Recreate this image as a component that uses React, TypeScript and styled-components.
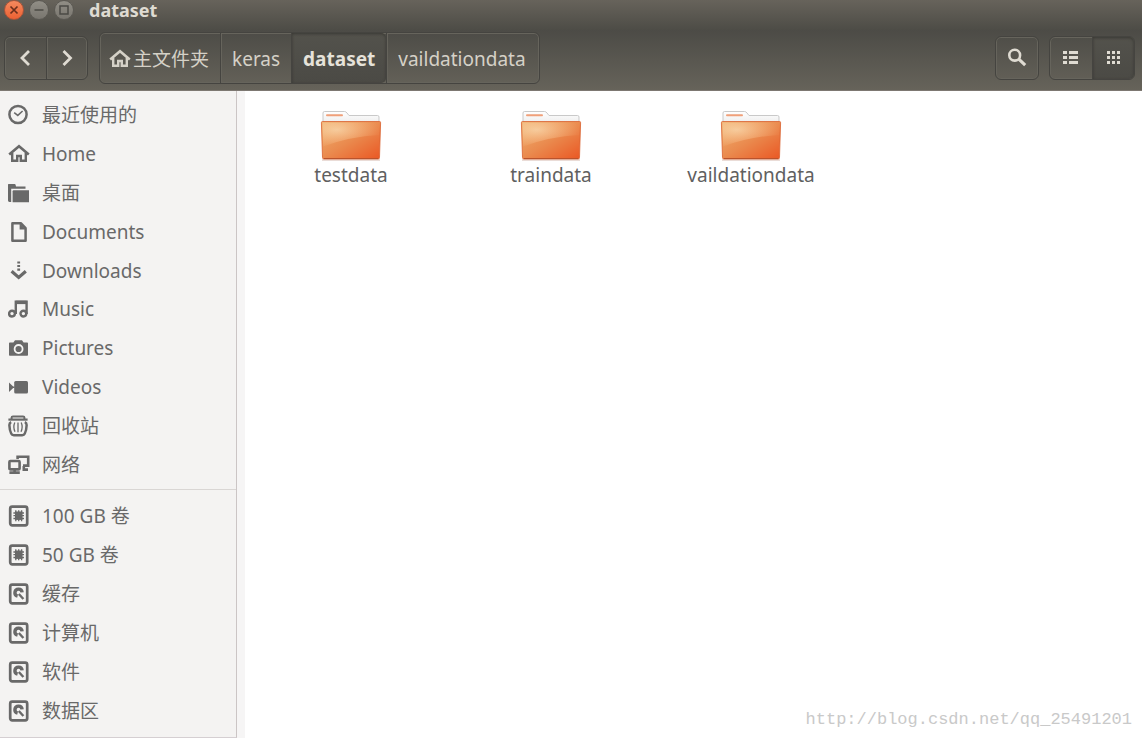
import React from "react";
import styled, { createGlobalStyle, css } from "styled-components";

const GlobalStyle = createGlobalStyle`
  *, *::before, *::after { box-sizing: border-box; }
  body {
    margin: 0;
    background: #fff;
    font-family: "Noto Sans", "Noto Sans CJK SC", sans-serif;
    font-size: 19px;
    line-height: 24px;
  }
`;

const Window = styled.div`
  display: flex;
  flex-direction: column;
  min-height: 100vh;
`;

const TitleBar = styled.header`
  display: flex;
  align-items: flex-start;
  height: 30px;
  padding-left: 4px;
  background: linear-gradient(#67635b, #4d4c46);
`;

const WindowControls = styled.div`
  display: flex;
  gap: 5px;
`;

const WindowButton = styled.button<{ $close?: boolean }>`
  display: grid;
  place-items: center;
  width: 20px;
  height: 20px;
  padding: 0;
  border: 1px solid ${(p) => (p.$close ? "#a8543a" : "#5b5953")};
  border-radius: 50%;
  background: ${(p) =>
    p.$close ? "linear-gradient(#f58a5e, #ec6133)" : "linear-gradient(#918e86, #79766f)"};
  color: ${(p) => (p.$close ? "#6b2f1c" : "#4b4a45")};
`;

const Title = styled.h1`
  margin: 0 0 0 15px;
  color: #dfdbd2;
  font-size: 18px;
  font-weight: 700;
  line-height: 20px;
`;

const ToolBar = styled.div`
  display: flex;
  align-items: center;
  height: 61px;
  padding: 0 7px 4px 4px;
  border-bottom: 1px solid #7d7872;
  background: linear-gradient(#4c4b46, #66635a);
`;

const ButtonGroup = styled.div<{ $gap?: number }>`
  display: flex;
  margin-left: ${(p) => p.$gap ?? 0}px;
  border: 1px solid #454440;
  border-radius: 6px;
  box-shadow: inset 0 0 0 1px #66645c;
`;

const pressed = css`
  background: linear-gradient(#53524c, #4b4a45);
  box-shadow: inset 0 1px 3px #393833;
`;

const ToolButton = styled.button<{ $active?: boolean; $narrow?: boolean }>`
  display: grid;
  place-items: center;
  width: ${(p) => (p.$narrow ? 41 : 42)}px;
  height: 42px;
  padding: 0;
  border: 0;
  border-radius: 0;
  background: none;
  color: #dfdbd2;
  & + & { border-left: 1px solid #454440; box-shadow: inset 1px 0 #66645c; }
  &:last-child { border-radius: 0 5px 5px 0; }
  ${(p) => p.$active && css`&&& { ${pressed} }`}
`;

const PathBar = styled.nav`
  display: flex;
  margin-left: 11px;
  border: 1px solid #454440;
  border-radius: 6px;
  box-shadow: inset 0 0 0 1px #66645c;
`;

const PathButton = styled.button<{ $active?: boolean }>`
  display: flex;
  align-items: center;
  gap: 2px;
  height: 50px;
  padding: 2px 11px 0;
  border: 0;
  background: none;
  color: #d5d1c7;
  font: inherit;
  white-space: nowrap;
  &:first-child { padding-left: 9px; }
  &:last-child { padding-right: 13px; }
  & + & { border-left: 1px solid #454440; box-shadow: inset 1px 0 #66645c; }
  ${(p) =>
    p.$active &&
    css`&&& { ${pressed} border-radius: 0 5px 5px 0; color: #e6e2da; font-weight: 700; }`}
`;

const Actions = styled.div`
  display: flex;
  margin-left: auto;
`;

const Body = styled.div`
  display: flex;
  flex: 1;
`;

const Sidebar = styled.nav`
  flex: 0 0 237px;
  padding: 5px 0;
  border-right: 1px solid #cbc5c5;
  border-bottom: 1px solid #d5cfd2;
  background: #f4f3f2;
`;

const PlaceList = styled.ul<{ $height: number }>`
  display: grid;
  grid-auto-rows: 1fr;
  min-height: ${(p) => p.$height}px;
  margin: 0;
  padding: 0;
  list-style: none;
  & + & {
    margin-top: 5px;
    padding-top: 7px;
    border-top: 1px solid #d9d6d4;
  }
`;

const Place = styled.a`
  display: flex;
  align-items: center;
  gap: 12px;
  height: 100%;
  padding-left: 8px;
  color: #696969;
  text-decoration: none;
`;

const Content = styled.main`
  display: flex;
  flex: 1;
  flex-direction: column;
  justify-content: space-between;
  border-left: 8px solid #f6f5f5;
  background: #fff;
`;

const Files = styled.div`
  display: flex;
  flex-wrap: wrap;
  padding: 19px 6px;
`;

const FileItem = styled.a`
  display: flex;
  flex-direction: column;
  align-items: center;
  width: 200px;
  color: #606060;
  text-decoration: none;
`;

const FileName = styled.span`
  margin-top: 1px;
`;

const Watermark = styled.footer`
  padding: 0 10px 6px;
  color: #c9c9c9;
  font-family: "Liberation Mono", monospace;
  font-size: 17px;
  text-align: right;
`;

const HomeShape = () => (
  <>
    <path d="M1.2 11.4 11 3.2l9.8 8.2" fill="none" stroke="currentColor" strokeWidth="2.6" />
    <path d="M4.2 10v7.8h5V13h3.6v4.8h5V10" fill="none" stroke="currentColor" strokeWidth="2.4" />
  </>
);

const DriveFrame = () => (
  <rect x="2.2" y="1.7" width="17" height="18.6" rx="2" fill="none" stroke="currentColor" strokeWidth="2.7" />
);

const shapes: Record<string, React.ReactNode> = {
  recent: (
    <g fill="none" stroke="currentColor">
      <circle cx="10" cy="10.5" r="8.6" strokeWidth="2.5" />
      <path d="M6.2 8.6 9.8 11.4l4.8-4.4" strokeWidth="1.5" />
    </g>
  ),
  home: <HomeShape />,
  desktop: (
    <g fill="currentColor">
      <path d="M0 2.5Q0 2 .6 2h6q.8 0 1 .8L8 4.4h9.5v2.4H3.2V20H1.4Q0 20 0 18.6Z" />
      <path d="M4.6 9.2q0-1 1-1H21v12H4.6Z" />
    </g>
  ),
  documents: (
    <g>
      <path d="M4.4 2.2h8.4l4.8 5v12.6H4.4Z" fill="none" stroke="currentColor" strokeWidth="2.5" strokeLinejoin="round" />
      <path d="M11.6 2v6.4H18Z" fill="currentColor" />
    </g>
  ),
  downloads: (
    <g fill="currentColor">
      <path d="M9.3 1.4h2.8v2H9.3ZM9.3 5h2.8v2H9.3ZM9.3 8.6h2.8v2.2H9.3Z" />
      <path d="m3.6 11.2 7.1 6.2 7.1-6.2" fill="none" stroke="currentColor" strokeWidth="3.2" />
    </g>
  ),
  music: (
    <g fill="none" stroke="currentColor" strokeWidth="2.4">
      <circle cx="4" cy="15.6" r="2.9" />
      <circle cx="15.4" cy="15.6" r="2.9" />
      <path d="M7.8 16V3.6h10.8V16" />
      <path d="M7.8 4.4h10.8" strokeWidth="3.4" />
    </g>
  ),
  pictures: (
    <g>
      <path d="M1.8 5.4h3.6L7 3.2h7l1.6 2.2h3.6q.8 0 .8.8V18q0 .8-.8.8H1.8Q1 18.8 1 18V6.2q0-.8.8-.8Z" fill="currentColor" />
      <circle cx="10.6" cy="12" r="4" fill="none" stroke="#f4f3f2" strokeWidth="1.8" />
    </g>
  ),
  videos: (
    <g fill="currentColor">
      <path d="M1 6.4 5.2 10.4h1.4v1.6H5.2L1 16Z" />
      <rect x="6.2" y="5" width="13.8" height="12.4" rx="1.5" />
    </g>
  ),
  trash: (
    <g fill="none" stroke="currentColor">
      <path d="M.4 4.6h19.2" strokeWidth="2.2" />
      <path d="M3.6 4V2.6Q3.6 1.4 5 1.4h10q1.4 0 1.4 1.2V4" strokeWidth="2" />
      <path d="M3.2 7.2Q1.2 8 1.4 10.5q.2 5 1.8 8 .7 1.7 2.6 1.7h8.4q1.9 0 2.6-1.7 1.6-3 1.8-8 .2-2.5-1.8-3.3" strokeWidth="2.5" />
      <path d="M6.8 7.4q-2 4.5.2 9.4M10 7.4v9.8M13.2 7.4q2 4.5-.2 9.4" strokeWidth="1.3" />
    </g>
  ),
  network: (
    <g fill="none" stroke="currentColor" strokeWidth="2.6">
      <path d="M9.6 5V2.8h10.6v8.8H15" />
      <path d="M15.8 12v3.6h4.2" />
      <rect x="1.4" y="7" width="10.2" height="8.4" rx="1" />
      <path d="M1.4 18.6h10.4M6.6 15v3" />
    </g>
  ),
  ssd: (
    <g fill="none" stroke="currentColor">
      <DriveFrame />
      <rect x="7" y="6.5" width="7.4" height="8.4" fill="currentColor" stroke="none" />
      <path d="M7.8 5.2v11M10.7 5.2v11M13.6 5.2v11M5.4 8h10.6M5.4 10.7h10.6M5.4 13.5h10.6" strokeWidth="1.3" />
    </g>
  ),
  drive: (
    <g fill="none" stroke="currentColor">
      <DriveFrame />
      <path d="M9.6 13.2a3.6 3.6 0 1 1 4.5-3.8" strokeWidth="3.4" />
      <path d="m10.8 11 4.6 5" strokeWidth="2.4" />
    </g>
  ),
};

const Icon = ({ name }: { name: string }) => (
  <svg width="22" height="22" viewBox="0 0 22 22" aria-hidden="true">
    {shapes[name]}
  </svg>
);

const Folder = () => (
  <svg width="62" height="52" viewBox="0 0 62 52" aria-hidden="true">
    <defs>
      <linearGradient id="front" x1="0" y1="0" x2="1" y2="1">
        <stop offset="0" stopColor="#efb271" />
        <stop offset=".5" stopColor="#ea8a4e" />
        <stop offset="1" stopColor="#ea5723" />
      </linearGradient>
      <radialGradient id="shine" cx=".25" cy=".3" r=".75">
        <stop offset="0" stopColor="#fbe3bd" stopOpacity=".65" />
        <stop offset="1" stopColor="#ffcf9c" stopOpacity=".05" />
      </radialGradient>
      <linearGradient id="paper" x1="0" y1="0" x2="0" y2="1">
        <stop offset="0" stopColor="#fff" />
        <stop offset="1" stopColor="#ececec" />
      </linearGradient>
    </defs>
    <path d="M3 14V3q0-1.5 1.5-1.5h20q1.5 0 2.5 1.5l2 2.5h28.5q1.5 0 1.5 1.5v7Z" fill="url(#paper)" stroke="#c9c9c9" />
    <path d="M7 5.2h15" stroke="#f0a07a" strokeWidth="2" strokeLinecap="round" />
    <path d="M2 50h58" stroke="#b98a78" strokeOpacity=".4" strokeWidth="1.5" />
    <path d="M2.5 11.5h57q1.2 0 1.1 1.2L59.5 47.5q0 1.5-1.5 1.5H4q-1.5 0-1.5-1.5L1.4 12.7q-.1-1.2 1.1-1.2Z" fill="url(#front)" stroke="#d9622f" strokeOpacity=".8" />
    <path d="M2.5 12.5h57L59 25Q30 26.5 3 36.5Z" fill="url(#shine)" />
    <path d="M4 48.5h54" stroke="#b9532c" />
  </svg>
);

const places = [
  ["recent", "最近使用的"],
  ["home", "Home"],
  ["desktop", "桌面"],
  ["documents", "Documents"],
  ["downloads", "Downloads"],
  ["music", "Music"],
  ["pictures", "Pictures"],
  ["videos", "Videos"],
  ["trash", "回收站"],
  ["network", "网络"],
];

const volumes = [
  ["ssd", "100 GB 卷"],
  ["ssd", "50 GB 卷"],
  ["drive", "缓存"],
  ["drive", "计算机"],
  ["drive", "软件"],
  ["drive", "数据区"],
];

const files = ["testdata", "traindata", "vaildationdata"];

const Places = ({ items, height }: { items: string[][]; height: number }) => (
  <PlaceList $height={height}>
    {items.map(([icon, label]) => (
      <li key={label}>
        <Place href="#">
          <Icon name={icon} />
          {label}
        </Place>
      </li>
    ))}
  </PlaceList>
);

export default function App() {
  return (
    <Window lang="zh-CN">
      <GlobalStyle />
      <TitleBar>
        <WindowControls>
          <WindowButton $close aria-label="关闭">
            <svg width="10" height="10" viewBox="0 0 10 10"><path d="m1.5 1.5 7 7m0-7-7 7" stroke="currentColor" strokeWidth="1.7" /></svg>
          </WindowButton>
          <WindowButton aria-label="最小化">
            <svg width="10" height="10" viewBox="0 0 10 10"><path d="M.5 5h9" stroke="currentColor" strokeWidth="1.5" /></svg>
          </WindowButton>
          <WindowButton aria-label="最大化">
            <svg width="10" height="10" viewBox="0 0 10 10"><rect x="1" y="1" width="8" height="8" fill="none" stroke="currentColor" strokeWidth="1.5" /></svg>
          </WindowButton>
        </WindowControls>
        <Title>dataset</Title>
      </TitleBar>
      <ToolBar>
        <ButtonGroup>
          <ToolButton $narrow aria-label="后退">
            <svg width="16" height="18" viewBox="0 0 16 18"><path d="M11 2 4 9l7 7" fill="none" stroke="currentColor" strokeWidth="2.8" /></svg>
          </ToolButton>
          <ToolButton $narrow aria-label="前进">
            <svg width="16" height="18" viewBox="0 0 16 18"><path d="m4.500 2 7 7-7 7" fill="none" stroke="currentColor" strokeWidth="2.8" /></svg>
          </ToolButton>
        </ButtonGroup>
        <PathBar aria-label="路径">
          <PathButton><Icon name="home" />主文件夹</PathButton>
          <PathButton>keras</PathButton>
          <PathButton $active aria-current="page">dataset</PathButton>
          <PathButton>vaildationdata</PathButton>
        </PathBar>
        <Actions>
          <ButtonGroup>
            <ToolButton aria-label="搜索">
              <svg width="20" height="20" viewBox="0 0 20 20" fill="none" stroke="currentColor">
                <circle cx="7.7" cy="7.2" r="5.4" strokeWidth="2.6" />
                <path d="m11.8 11.2 6.4 6" strokeWidth="3.2" />
              </svg>
            </ToolButton>
          </ButtonGroup>
          <ButtonGroup $gap={10}>
            <ToolButton aria-label="列表视图">
              <svg width="16" height="14" viewBox="0 0 16 14" fill="currentColor">
                <path d="M0 0h4v3H0ZM6 0h9v3H6ZM0 5h4v3H0ZM6 5h9v3H6ZM0 10h4v3H0ZM6 10h9v3H6Z" />
              </svg>
            </ToolButton>
            <ToolButton $active aria-label="图标视图" aria-pressed="true">
              <svg width="16" height="14" viewBox="0 0 16 14" fill="currentColor">
                <path d="M1 0h3v3H1ZM6 0h3v3H6ZM11 0h3v3h-3ZM1 5h3v3H1ZM6 5h3v3H6ZM11 5h3v3h-3ZM1 10h3v3H1ZM6 10h3v3H6ZM11 10h3v3h-3Z" />
              </svg>
            </ToolButton>
          </ButtonGroup>
        </Actions>
      </ToolBar>
      <Body>
        <Sidebar aria-label="位置">
          <Places items={places} height={388} />
          <Places items={volumes} height={241} />
        </Sidebar>
        <Content>
          <Files>
            {files.map((name) => (
              <FileItem href="#" key={name}>
                <Folder />
                <FileName>{name}</FileName>
              </FileItem>
            ))}
          </Files>
          <Watermark>http://blog.csdn.net/qq_25491201</Watermark>
        </Content>
      </Body>
    </Window>
  );
}
